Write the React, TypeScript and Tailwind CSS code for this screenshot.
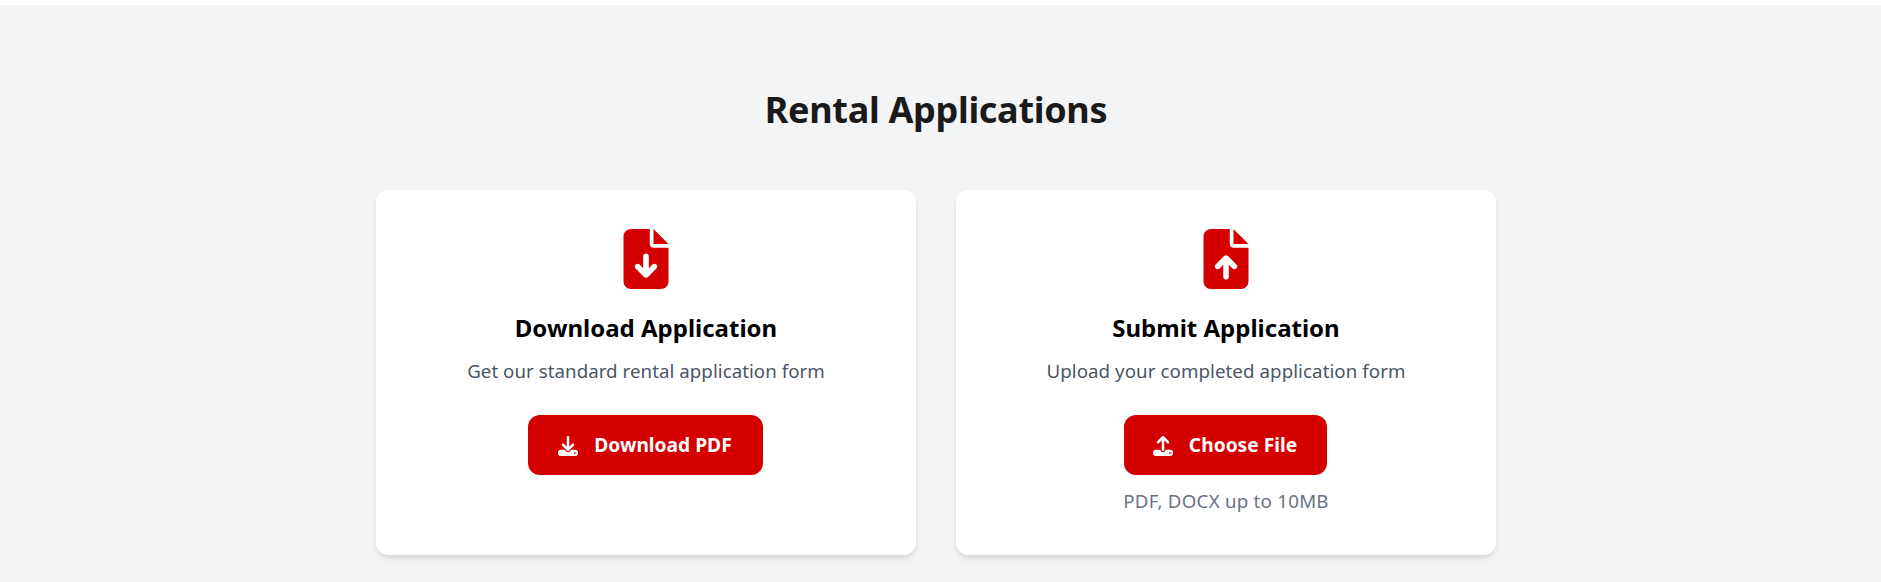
import React from 'react';
import { FaFileArrowDown, FaFileArrowUp, FaDownload, FaUpload } from 'react-icons/fa6';

export default function App() {
    return (
        <div className="min-h-[582px] bg-white pt-[5px] font-['Noto_Sans','Open_Sans',sans-serif]">
            <section className="bg-gray-100 h-[577px] pt-[85px] pr-[9px]">
                <h2 className="text-[36px] leading-[40px] font-bold tracking-[-0.3px] text-[#1a1a1a] text-center mb-[60px]">Rental Applications</h2>

                <div className="w-[1120px] mx-auto grid grid-cols-2 gap-10">
                    {/* Download */}
                    <div className="bg-white rounded-xl shadow-md h-[365px] pt-[39px] flex flex-col items-center">
                        <FaFileArrowDown className="text-[#d40000] text-[60px]" />
                        <h3 className="mt-[23px] text-[24px] leading-[32px] font-bold text-black">Download Application</h3>
                        <p className="mt-[13px] text-[18.7px] leading-[28px] tracking-[0.05px] text-gray-600">Get our standard rental application form</p>
                        <button className="mt-[30px] h-[60px] w-[235px] pt-[1px] -translate-x-[1px] rounded-xl bg-[#d40000] text-white text-[19.2px] font-bold flex items-center justify-center gap-4">
                            <FaDownload className="text-[20px]" /> Download PDF
                        </button>
                    </div>

                    {/* Submit */}
                    <div className="bg-white rounded-xl shadow-md h-[365px] pt-[39px] flex flex-col items-center">
                        <FaFileArrowUp className="text-[#d40000] text-[60px]" />
                        <h3 className="mt-[23px] text-[24px] leading-[32px] font-bold text-black">Submit Application</h3>
                        <p className="mt-[13px] text-[18.7px] leading-[28px] tracking-[0.08px] text-gray-600">Upload your completed application form</p>
                        <button className="mt-[30px] h-[60px] w-[203px] pt-[1px] -translate-x-[1px] rounded-xl bg-[#d40000] text-white text-[19.2px] font-bold flex items-center justify-center gap-4">
                            <FaUpload className="text-[20px]" /> Choose File
                        </button>
                        <p className="mt-[14px] text-[18.7px] leading-[24px] tracking-[0.25px] text-gray-500">PDF, DOCX up to 10MB</p>
                    </div>
                </div>
            </section>
        </div>
    );
}
